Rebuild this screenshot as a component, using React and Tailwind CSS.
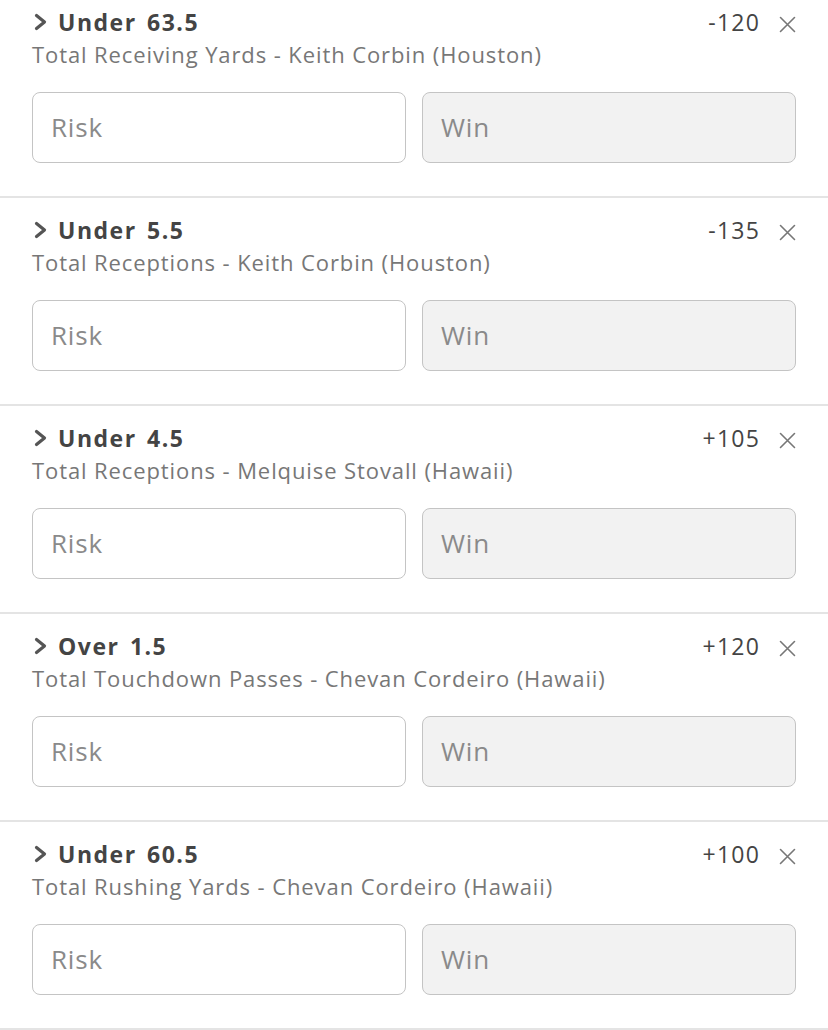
import React from "react";

const bets = [
  { title: "Under 63.5", odds: "-120", sub: "Total Receiving Yards - Keith Corbin (Houston)" },
  { title: "Under 5.5", odds: "-135", sub: "Total Receptions - Keith Corbin (Houston)" },
  { title: "Under 4.5", odds: "+105", sub: "Total Receptions - Melquise Stovall (Hawaii)" },
  { title: "Over 1.5", odds: "+120", sub: "Total Touchdown Passes - Chevan Cordeiro (Hawaii)" },
  { title: "Under 60.5", odds: "+100", sub: "Total Rushing Yards - Chevan Cordeiro (Hawaii)" },
];

function Chevron() {
  return (
    <svg width="15" height="18" viewBox="0 0 15 18" className="shrink-0">
      <path d="M3.5 2.5 L11.5 9 L3.5 15.5" fill="none" stroke="#555" strokeWidth="3.2" strokeLinecap="round" strokeLinejoin="round" />
    </svg>
  );
}

function Cross() {
  return (
    <svg width="17" height="17" viewBox="0 0 17 17" className="shrink-0 mt-[5px]">
      <path d="M1.5 1.5 L15.5 15.5 M15.5 1.5 L1.5 15.5" stroke="#777" strokeWidth="1.6" strokeLinecap="round" />
    </svg>
  );
}

function Bet({ b }) {
  return (
    <div className="h-[208px] border-b-2 border-[#e4e4e4] px-8 pt-4">
      <div className="flex items-start justify-between">
        <div className="flex items-center gap-[10px] h-8 pl-[1px]">
          <Chevron />
          <span className="text-[23px] leading-8 font-bold text-[#444] tracking-[1.5px] [word-spacing:3px]">{b.title}</span>
        </div>
        <div className="flex items-center h-8 gap-[19px]">
          <span className="text-[23px] leading-8 text-[#444] tracking-[1.2px]">{b.odds}</span>
          <Cross />
        </div>
      </div>
      <div className="mt-[1px] text-[22px] leading-[30px] text-[#777] tracking-[0.9px]">{b.sub}</div>
      <div className="mt-[23px] flex gap-4">
        <div className="flex-1 h-[71px] rounded-[8px] border-[1.5px] border-[#c4c4c4] bg-white flex items-center px-[18px]">
          <span className="text-[26px] text-[#8a8a8a] tracking-[0.8px]">Risk</span>
        </div>
        <div className="flex-1 h-[71px] rounded-[8px] border-[1.5px] border-[#c4c4c4] bg-[#f2f2f2] flex items-center px-[18px]">
          <span className="text-[26px] text-[#8a8a8a] tracking-[0.8px]">Win</span>
        </div>
      </div>
    </div>
  );
}

export default function App() {
  return (
    <div className="w-[828px] h-[1030px] overflow-hidden bg-white" style={{ fontFamily: "'Open Sans', 'Noto Sans', sans-serif" }}>
      <div className="-mt-[10px]">
        {bets.map((b, i) => (
          <Bet key={i} b={b} />
        ))}
      </div>
    </div>
  );
}
